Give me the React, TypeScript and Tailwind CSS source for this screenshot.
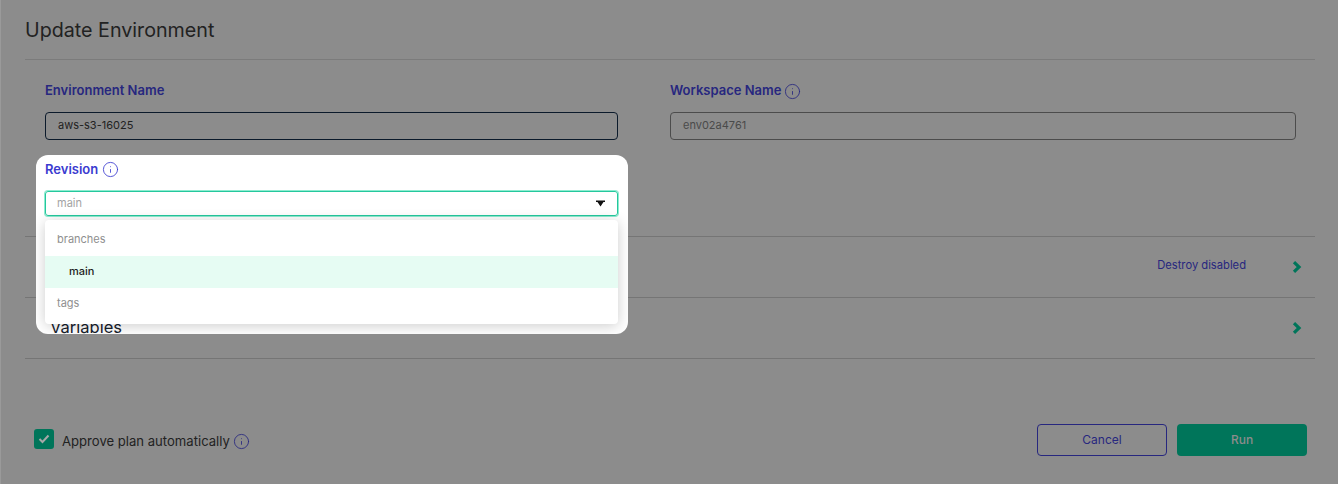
import { Info } from "lucide-react";

function Chevron() {
  return (
    <svg width="10" height="12" viewBox="0 0 10 12" fill="none" className="block">
      <path d="M2 1.2 L7 6 L2 10.8" stroke="#00755a" strokeWidth="3.2" />
    </svg>
  );
}

function Row({ right }: { right?: string }) {
  return (
    <div className="h-[61px] border-b border-[#757575] flex items-center justify-end pr-[13px]">
      {right && <span className="text-[11.2px] text-[#27277f] mr-[46px] -mt-[3px]">{right}</span>}
      <Chevron />
    </div>
  );
}

export default function App() {
  return (
    <div className="relative w-[1338px] h-[484px] overflow-hidden bg-[#8c8c8c] border-l border-[#9a9a9a] font-['Inter',sans-serif]">
      <div className="pl-[24px] pr-[23px]">
        <div className="h-[60px] border-b border-[#7b7b7b] flex items-center pt-[2px] text-[19.7px] text-[#222222]">
          Update Environment
        </div>
        <div className="pl-[20px] pr-[19px] pt-[22px] grid grid-cols-[573px_626px] gap-x-[52px]">
          <div>
            <div className="h-[18px] flex items-center text-[13px] font-semibold text-[#27277f]">Environment Name</div>
            <div className="mt-[12px] h-[28px] rounded border border-[#0b1a2b] flex items-center pl-[12px] pb-[2px] text-[11px] text-[#222222]">
              aws-s3-16025
            </div>
          </div>
          <div>
            <div className="h-[18px] flex items-center gap-[3px] text-[13px] font-semibold text-[#27277f]">
              Workspace Name <Info size={17} strokeWidth={1.2} />
            </div>
            <div className="mt-[12px] h-[28px] rounded border border-[#4c4c4c] flex items-center pl-[12px] pb-[2px] text-[11px] text-[#4a4a4a]">
              env02a4761
            </div>
          </div>
        </div>
        <div className="h-[97px] border-b border-[#757575]" />
        <Row right="Destroy disabled" />
        <Row />
        <div className="pt-[65px] flex items-center justify-between pl-[9px] pr-[8px]">
          <div className="flex items-center">
            <div className="w-[20px] h-[20px] mb-[2px] rounded-[3px] bg-[#00755a] flex items-center justify-center">
              <svg width="12" height="10" viewBox="0 0 12 10" fill="none">
                <path d="M1.5 5 L4.5 8 L10.5 1.5" stroke="#a8a8a8" strokeWidth="2" />
              </svg>
            </div>
            <span className="ml-[8px] mt-[4px] text-[13.1px] text-[#222222]">Approve plan automatically</span>
            <Info size={17} strokeWidth={1.2} className="ml-[3px] mt-[4px] text-[#27277f]" />
          </div>
          <div className="flex gap-[10px]">
            <div className="w-[130px] h-[32px] rounded border border-[#27277f] flex items-center justify-center text-[12px] text-[#27277f]">
              Cancel
            </div>
            <div className="w-[130px] h-[32px] rounded bg-[#00755a] flex items-center justify-center text-[12px] font-medium text-[#8c8c8c]">
              Run
            </div>
          </div>
        </div>
      </div>

      <div className="absolute left-[35px] top-[155px] w-[592px] h-[179px] rounded-[12px] bg-white overflow-hidden">
        <div className="absolute left-[14px] top-[162px] text-[16.5px] leading-[20px] text-[#16202c]">Variables</div>
        <div className="relative pl-[9px] pr-[10px] pt-[6px]">
          <div className="h-[17px] flex items-center gap-[4px] text-[13px] font-semibold text-[#3b3bd0]">
            Revision <Info size={17} strokeWidth={1.2} />
          </div>
          <div className="mt-[13px] h-[25px] rounded-[3px] border border-[#25c79d] shadow-[0_0_0_1px_#8eecd0] flex items-center justify-between pl-[11px] pr-[12px] text-[11px] text-[#a3a3a3]">
            main
            <svg width="9" height="7" viewBox="0 0 9 7" className="block">
              <path d="M0 0.5 H9 V2 H7.5 L4.5 6.5 L1.5 2 H0 Z" fill="#111111" />
            </svg>
          </div>
          <div className="mt-[4px] h-[104px] rounded bg-white shadow-[0_2px_14px_rgba(0,0,0,0.2)] py-[4px] text-[11px]">
            <div className="h-[32px] flex items-center pl-[12px] pb-[2px] text-[#8f8f8f]">branches</div>
            <div className="h-[32px] flex items-center pl-[24px] pb-[2px] bg-[#e6fcf3] font-medium text-[#222222]">main</div>
            <div className="h-[32px] flex items-center pl-[12px] pb-[2px] text-[#8f8f8f]">tags</div>
          </div>
        </div>
      </div>
    </div>
  );
}
